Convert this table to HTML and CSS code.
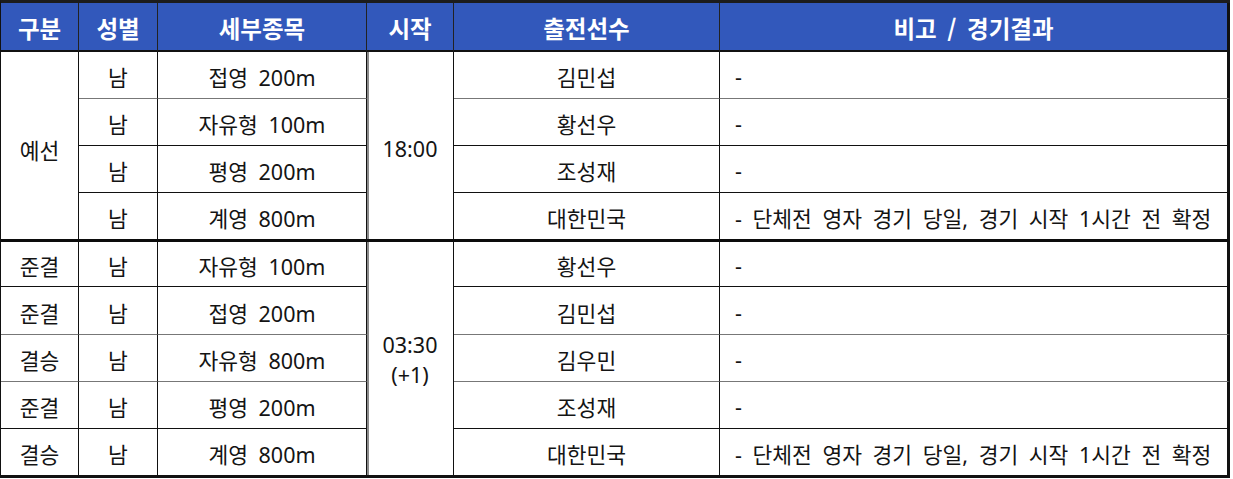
FILE: index.html
```html
<!DOCTYPE html>
<html lang="ko">
<head>
<meta charset="utf-8">
<title>경기 일정</title>
<link rel="stylesheet" href="styles.css">
</head>
<body>
<div class="sheet">
  <div class="th">구분</div>
  <div class="th">성별</div>
  <div class="th">세부종목</div>
  <div class="th">시작</div>
  <div class="th">출전선수</div>
  <div class="th last">비고 / 경기결과</div>

  <div class="td c1 span-a thick">예선</div>
  <div class="td r1 soft">남</div>
  <div class="td r1 soft">접영 200m</div>
  <div class="td c4 span-a thick">18:00</div>
  <div class="td r1 soft">김민섭</div>
  <div class="td note r1 soft last">-</div>

  <div class="td r2">남</div>
  <div class="td r2">자유형 100m</div>
  <div class="td r2">황선우</div>
  <div class="td note r2 last">-</div>

  <div class="td r3">남</div>
  <div class="td r3">평영 200m</div>
  <div class="td r3">조성재</div>
  <div class="td note r3 last">-</div>

  <div class="td r4 thick">남</div>
  <div class="td r4 thick">계영 800m</div>
  <div class="td r4 thick">대한민국</div>
  <div class="td note r4 thick last">- 단체전 영자 경기 당일, 경기 시작 1시간 전 확정</div>

  <div class="td r5">준결</div>
  <div class="td r5">남</div>
  <div class="td r5">자유형 100m</div>
  <div class="td c4 span-b">03:30<br>(+1)</div>
  <div class="td r5">황선우</div>
  <div class="td note r5 last">-</div>

  <div class="td r6 soft">준결</div>
  <div class="td r6 soft">남</div>
  <div class="td r6 soft">접영 200m</div>
  <div class="td r6 soft">김민섭</div>
  <div class="td note r6 soft last">-</div>

  <div class="td r7 soft">결승</div>
  <div class="td r7 soft">남</div>
  <div class="td r7 soft">자유형 800m</div>
  <div class="td r7 soft">김우민</div>
  <div class="td note r7 soft last">-</div>

  <div class="td r8">준결</div>
  <div class="td r8">남</div>
  <div class="td r8">평영 200m</div>
  <div class="td r8">조성재</div>
  <div class="td note r8 last">-</div>

  <div class="td r9 end">결승</div>
  <div class="td r9 end">남</div>
  <div class="td r9 end">계영 800m</div>
  <div class="td r9 end">대한민국</div>
  <div class="td note r9 end last">- 단체전 영자 경기 당일, 경기 시작 1시간 전 확정</div>
</div>
</body>
</html>
```

FILE: styles.css
```css
* {
  box-sizing: border-box;
}

html, body {
  margin: 0;
  padding: 0;
  background: #ffffff;
}

.sheet {
  width: 1230px;
  display: grid;
  grid-template-columns: 78px 79px 209px 87px 266px 510px;
  grid-template-rows: 49px 47px 47px 47px 49px 45px 48px 47px 47px 46px;
  border-top: 3px solid #1c1c1c;
  border-left: 1px solid #111;
  border-bottom: 3px solid #111;
  font-family: "Noto Sans", "Noto Sans CJK KR", sans-serif;
  color: #141414;
}

.th {
  background: #3258bb;
  color: #ffffff;
  font-family: "Noto Sans CJK KR", "Noto Sans", sans-serif;
  font-weight: 700;
  font-size: 23.5px;
  word-spacing: 4px;
  display: flex;
  align-items: center;
  justify-content: center;
  border-right: 1px solid #222;
  border-bottom: 2px solid #111;
  padding-top: 2px;
}

.th.last {
  border-right: 3px solid #111;
}

.td {
  font-size: 21.5px;
  word-spacing: 5px;
  display: flex;
  align-items: center;
  justify-content: center;
  border-right: 1px solid #111;
  border-bottom: 1px solid #111;
  padding-top: 3px;
  white-space: nowrap;
}

.td.soft {
  border-bottom-color: #777;
}

.td.thick {
  border-bottom: 3px solid #0c0c0c;
}

.td.end {
  border-bottom: 0;
}

.td.last {
  border-right: 3px solid #111;
}

.note {
  justify-content: flex-start;
  padding-left: 15px;
}

.c1 {
  grid-column: 1;
}

.c4 {
  grid-column: 4;
  border-left: 0;
  border-right: 1px solid #111;
  box-shadow: inset 2px 0 0 #8a8a8a;
  text-align: center;
  line-height: 30px;
}

.span-a {
  grid-row: 2 / span 4;
}

.span-b {
  grid-row: 6 / span 5;
  border-bottom: 0;
}

.c1.span-a {
  padding-top: 8px;
}

.c4.span-a {
  padding-top: 6px;
}
```
